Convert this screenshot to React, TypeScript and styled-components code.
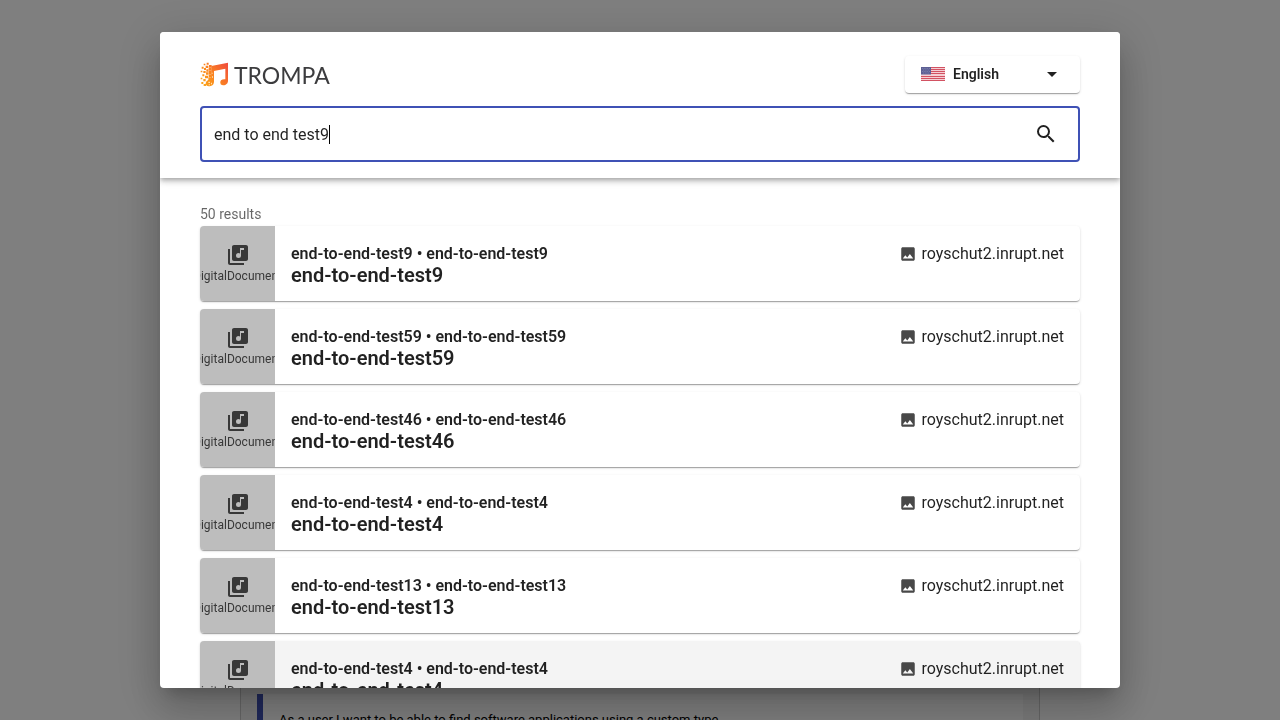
import React, { useState } from "react";
import styled, { createGlobalStyle } from "styled-components";
import { MdArrowDropDown, MdImage, MdLibraryMusic, MdSearch } from "react-icons/md";

const GlobalStyle = createGlobalStyle`
  *, *::before, *::after { box-sizing: border-box; }
  body {
    margin: 0;
    background: #fff;
    color: rgba(0, 0, 0, 0.87);
    font-family: Roboto, "Liberation Sans", sans-serif;
    font-size: 16px;
    overflow: hidden;
  }
  button, input, select { font: inherit; color: inherit; }
`;

const Page = styled.main`
  height: 100vh;
  padding-top: 640px;
  overflow: hidden;
`;

const Story = styled.section`
  max-width: 800px;
  height: 160px;
  margin: 0 auto;
  padding: 53px 16px 0;
  border: 1px solid #ccc;
  background: #f5f5f5;
`;

const Quote = styled.blockquote`
  margin: 0;
  padding: 16px;
  border-left: 6px solid #3f51b5;
  background: #fff;
  color: #000;
  font-size: 13px;
  line-height: 20px;
`;

const Backdrop = styled.div`
  position: fixed;
  inset: 0;
  display: flex;
  justify-content: center;
  padding: 32px;
  background: rgba(0, 0, 0, 0.5);
`;

const Dialog = styled.div`
  display: flex;
  flex-direction: column;
  width: 100%;
  max-width: 960px;
  overflow: hidden;
  border-radius: 4px;
  background: #fff;
  box-shadow:
    0 11px 15px -7px rgba(0, 0, 0, 0.2),
    0 24px 38px 3px rgba(0, 0, 0, 0.14),
    0 9px 46px 8px rgba(0, 0, 0, 0.12);
`;

const Header = styled.header`
  z-index: 1;
  flex: none;
  padding: 24px 40px 16px;
  background: #fff;
  box-shadow:
    0 2px 4px -1px rgba(0, 0, 0, 0.2),
    0 4px 5px rgba(0, 0, 0, 0.14),
    0 1px 10px rgba(0, 0, 0, 0.12);
`;

const TopBar = styled.div`
  display: flex;
  align-items: center;
  justify-content: space-between;
  margin-bottom: 13px;
`;

const Brand = styled.div`
  display: flex;
  align-items: center;
  gap: 5px;
  color: #3c3c3e;
  font-family: Lato, sans-serif;
  font-size: 23px;
  line-height: 28px;
`;

const raised = `
  border-radius: 4px;
  box-shadow:
    0 2px 1px -1px rgba(0, 0, 0, 0.2),
    0 1px 1px rgba(0, 0, 0, 0.14),
    0 1px 3px rgba(0, 0, 0, 0.12);
`;

const LanguagePicker = styled.div`
  display: grid;
  align-items: center;
  width: 175px;
  height: 37px;
  padding-bottom: 1px;
  ${raised}

  > * { grid-area: 1 / 1; }
  > svg { pointer-events: none; }
`;

const FlagIcon = styled.svg`
  margin-left: 16px;
  opacity: 0.8;
`;

const LanguageSelect = styled.select`
  width: 100%;
  height: 100%;
  padding: 0 40px 0 48px;
  border: 0;
  border-radius: 4px;
  outline: 0;
  background: transparent;
  appearance: none;
  font-size: 14px;
  font-weight: 600;
`;

const Arrow = styled(MdArrowDropDown)`
  justify-self: end;
  margin-right: 16px;
`;

const SearchField = styled.form`
  display: flex;
  align-items: center;
  height: 56px;
  padding: 0 8px 0 12px;
  border: 2px solid #3f51b5;
  border-radius: 4px;
`;

const SearchInput = styled.input`
  field-sizing: content;
  min-width: 1px;
  padding: 0;
  border: 0;
  outline: 0;
  background: transparent;
  caret-color: transparent;
`;

const Caret = styled.span`
  width: 1px;
  height: 19px;
  background: #000;
`;

const SearchButton = styled.button`
  display: flex;
  margin-left: auto;
  padding: 12px;
  border: 0;
  background: transparent;
`;

const Results = styled.section`
  flex: 1;
  min-height: 0;
  padding: 26px 40px 0;
  overflow: hidden;
`;

const Count = styled.p`
  margin: 0 0 2px;
  color: rgba(0, 0, 0, 0.6);
  font-size: 14px;
  line-height: 20px;
`;

const List = styled.ul`
  display: flex;
  flex-direction: column;
  gap: 8px;
  margin: 0;
  padding: 0;
  list-style: none;
`;

const Card = styled.li<{ $hovered?: boolean }>`
  display: flex;
  height: 75px;
  background: ${(p) => (p.$hovered ? "#f4f4f4" : "#fff")};
  ${raised}
`;

const Thumb = styled.div`
  display: flex;
  flex: none;
  flex-direction: column;
  align-items: center;
  width: 75px;
  padding-top: 17px;
  overflow: hidden;
  border-radius: 4px 0 0 4px;
  background: #bdbdbd;
  color: #383838;
  font-size: 12px;
  line-height: 18px;
`;

const CardBody = styled.div`
  display: flex;
  flex: 1;
  justify-content: space-between;
  padding: 16px;
`;

const Subtitle = styled.p`
  margin: 0;
  font-weight: 600;
  line-height: 24px;
`;

const Title = styled.h3`
  margin: 0;
  font-size: 20px;
  font-weight: 600;
  line-height: 18px;
`;

const Source = styled.div`
  display: flex;
  gap: 4px;
  align-items: center;
  height: 24px;
  line-height: 24px;

  svg { color: #484848; }
`;

const SourceName = styled.span`
  height: 24px;
  line-height: 23px;
`;

const TrompaMark = () => (
  <svg width="29" height="25" viewBox="0 0 87 75" aria-hidden="true">
    <defs>
      <linearGradient id="mark" gradientUnits="userSpaceOnUse" x1="10" y1="70" x2="84" y2="10">
        <stop offset="0" stopColor="#fba51c" />
        <stop offset="0.45" stopColor="#fa8320" />
        <stop offset="1" stopColor="#f04e3c" />
      </linearGradient>
    </defs>
    <path
      fill="url(#mark)"
      d="M34 12 84 2V58Q84 65 77 68Q68 72 62 67Q58 61 63 55Q68 51 76 52V20L42 27V60Q41 70 32 72Q20 75 17 67Q16 58 25 54L33 52Z"
    />
    <path
      fill="url(#mark)"
      d="M20 2h6v6h-6zM11 5h5v5h-5zM27 9h8v8h-8zM17 11h8v7h-8zM5 14h6v6h-6zM12 18h6v6h-6zM26 18h8v8h-8zM19 22h6v7h-6zM2 26h5v5h-5zM10 27h7v6h-7zM26 27h8v9h-8zM18 31h7v7h-7zM7 37h6v6h-6zM26 37h8v8h-8zM15 41h9v8h-9zM25 46h9v8h-9zM2 47h5v5h-5zM10 51h7v7h-7zM4 60h6v6h-6zM11 66h7v6h-7z"
    />
    <path fill="#ffe2b0" d="M25 59h5v4h-5zM33 62h3v5h-3zM26 67h4v3h-4zM35 32h3v3h-3zM36 43h3v4h-3z" />
  </svg>
);

const UsFlag = () => (
  <FlagIcon width="24" height="14" viewBox="0 0 24 14" aria-hidden="true">
    <path fill="#f3c4ca" d="M0 0h24v14H0z" />
    <path stroke="#c8283c" d="M0 .5h24M0 2.5h24M0 4.5h24M0 6.5h24M0 9.5h24M0 11.5h24M0 13.5h24" />
    <path fill="#34387a" d="M0 0h10v7.5H0z" />
    <path stroke="#8a8fc0" strokeWidth=".6" strokeDasharray=".7 1.1" d="M1 1.5h8M2 3h7M1 4.5h8M2 6h7" />
  </FlagIcon>
);

const results = [9, 59, 46, 4, 13, 4].map((n) => `end-to-end-test${n}`);

const ResultCard = ({ name, hovered }: { name: string; hovered: boolean }) => (
  <Card $hovered={hovered}>
    <Thumb>
      <MdLibraryMusic size={24} />
      <span>DigitalDocument</span>
    </Thumb>
    <CardBody>
      <div>
        <Subtitle>{name} • {name}</Subtitle>
        <Title>{name}</Title>
      </div>
      <Source>
        <MdImage size={18} />
        <SourceName>royschut2.inrupt.net</SourceName>
      </Source>
    </CardBody>
  </Card>
);

export default function App() {
  const [query, setQuery] = useState("end to end test9");

  return (
    <>
      <GlobalStyle />
      <Page>
        <Story>
          <Quote>As a user I want to be able to find software applications using a custom type.</Quote>
        </Story>
      </Page>
      <Backdrop>
        <Dialog role="dialog" aria-label="Search">
          <Header>
            <TopBar>
              <Brand>
                <TrompaMark />
                <span>TROMPA</span>
              </Brand>
              <LanguagePicker>
                <LanguageSelect aria-label="Language" defaultValue="en">
                  <option value="en">English</option>
                </LanguageSelect>
                <UsFlag />
                <Arrow size={24} />
              </LanguagePicker>
            </TopBar>
            <SearchField role="search" onSubmit={(e) => e.preventDefault()}>
              <SearchInput aria-label="Search" value={query} onChange={(e) => setQuery(e.target.value)} />
              <Caret />
              <SearchButton type="submit" aria-label="Search">
                <MdSearch size={24} />
              </SearchButton>
            </SearchField>
          </Header>
          <Results>
            <Count>50 results</Count>
            <List>
              {results.map((name, i) => (
                <ResultCard key={i} name={name} hovered={i === 5} />
              ))}
            </List>
          </Results>
        </Dialog>
      </Backdrop>
    </>
  );
}
